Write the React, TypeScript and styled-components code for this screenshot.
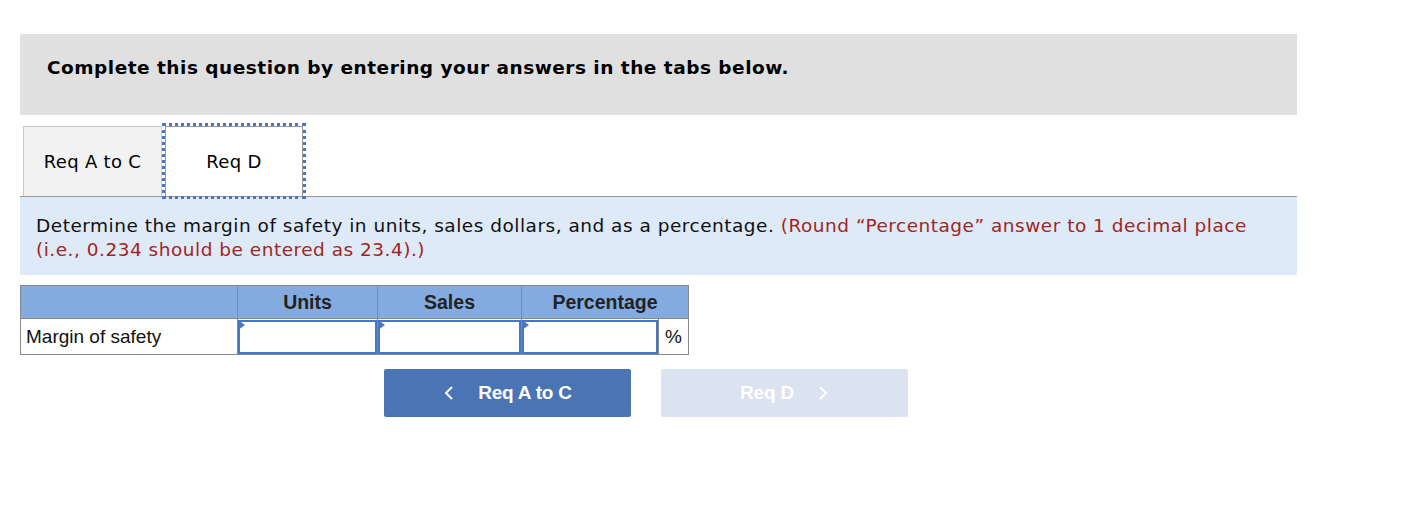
import React from "react";
import styled, { createGlobalStyle } from "styled-components";

const GlobalStyle = createGlobalStyle`
  body {
    margin: 0;
    background: #ffffff;
    font-family: "DejaVu Sans", Verdana, sans-serif;
  }
`;

const blue = "#4a76c0";

const Page = styled.div`
  width: 1277px;
  padding: 34px 0 0 20px;
`;

const Banner = styled.div`
  box-sizing: border-box;
  height: 81px;
  padding: 23px 27px;
  background: #e0e0e0;
  font-weight: bold;
  font-size: 18.5px;
  letter-spacing: 0.5px;
  color: #000;
`;

const TabRow = styled.div`
  display: flex;
  margin-top: 11px;
  padding-left: 3px;
  border-bottom: 1px solid #999;
`;

const Tab = styled.div<{ $active?: boolean }>`
  box-sizing: border-box;
  height: 70px;
  width: ${p => (p.$active ? "138px" : "139px")};
  margin-right: 3px;
  display: flex;
  align-items: center;
  justify-content: center;
  font-size: 18px;
  letter-spacing: 0.3px;
  color: #000;
  background: ${p => (p.$active ? "#fff" : "#f2f2f2")};
  border: 1px solid ${p => (p.$active ? "#999" : "#c8c8c8")};
  border-bottom: none;
  outline: ${p => (p.$active ? `3px dotted ${blue}` : "none")};
`;

const Instructions = styled.div`
  box-sizing: border-box;
  height: 78px;
  padding: 17px 16px 0;
  background: #deeaf8;
  font-size: 18.5px;
  letter-spacing: 0.5px;
  line-height: 24px;
  color: #111;
`;

const Note = styled.span`
  color: #a52420;
`;

const Grid = styled.table`
  margin-top: 10px;
  border-collapse: collapse;
  font-family: "Liberation Sans", Arial, sans-serif;
  font-size: 19px;
  color: #111;
`;

const HeadCell = styled.th<{ $w: number }>`
  width: ${p => p.$w}px;
  height: 33px;
  box-sizing: border-box;
  padding: 0;
  background: #84abe0;
  border: 1px solid #888;
  font-weight: bold;
  font-size: 19.5px;
  color: #222;
  text-align: center;
`;

const LabelCell = styled.td`
  height: 35px;
  box-sizing: border-box;
  padding: 0 0 0 5px;
  border: 1px solid #888;
  text-align: left;
`;

const InputCell = styled.td`
  height: 35px;
  padding: 0;
  border: 1px solid #888;
`;

const Field = styled.div`
  position: relative;
  box-sizing: border-box;
  height: 34px;
  border: 2px solid ${blue};
  background: #fff;
  &::before {
    content: "";
    position: absolute;
    left: -2px;
    top: -2px;
    border-top: 5px solid transparent;
    border-bottom: 5px solid transparent;
    border-left: 7px solid ${blue};
  }
`;

const UnitCell = styled.td<{ $w: number }>`
  width: ${p => p.$w}px;
  padding: 0;
  border: 1px solid #888;
  text-align: center;
`;

const Nav = styled.div`
  display: flex;
  gap: 30px;
  margin-top: 14px;
  padding-left: 364px;
`;

const NavButton = styled.button<{ $disabled?: boolean }>`
  box-sizing: border-box;
  width: 247px;
  height: 48px;
  display: flex;
  align-items: center;
  justify-content: center;
  gap: 24px;
  border: none;
  border-radius: 2px;
  background: ${p => (p.$disabled ? "#dae3ef" : "#4a74b4")};
  color: #fff;
  font-family: "Liberation Sans", Arial, sans-serif;
  font-weight: bold;
  font-size: 19px;
  letter-spacing: -0.2px;
  cursor: ${p => (p.$disabled ? "default" : "pointer")};
`;

const Chevron = ({ dir }: { dir: "left" | "right" }) => (
  <svg width="11" height="16" viewBox="0 0 11 16">
    <polyline
      points={dir === "left" ? "9,2 3,8 9,14" : "2,2 8,8 2,14"}
      fill="none"
      stroke="#fff"
      strokeWidth="2"
    />
  </svg>
);

export default function App() {
  return (
    <Page>
      <GlobalStyle />
      <Banner>Complete this question by entering your answers in the tabs below.</Banner>
      <TabRow>
        <Tab>Req A to C</Tab>
        <Tab $active>Req D</Tab>
      </TabRow>
      <Instructions>
        Determine the margin of safety in units, sales dollars, and as a percentage.{" "}
        <Note>(Round “Percentage” answer to 1 decimal place (i.e., 0.234 should be entered as 23.4).)</Note>
      </Instructions>
      <Grid>
        <thead>
          <tr>
            <HeadCell $w={217} />
            <HeadCell $w={140}>Units</HeadCell>
            <HeadCell $w={144}>Sales</HeadCell>
            <HeadCell $w={167} colSpan={2}>Percentage</HeadCell>
          </tr>
        </thead>
        <tbody>
          <tr>
            <LabelCell>Margin of safety</LabelCell>
            <InputCell><Field /></InputCell>
            <InputCell><Field /></InputCell>
            <InputCell><Field /></InputCell>
            <UnitCell $w={29}>%</UnitCell>
          </tr>
        </tbody>
      </Grid>
      <Nav>
        <NavButton>
          <Chevron dir="left" />
          <span>Req A to C</span>
        </NavButton>
        <NavButton $disabled>
          <span>Req D</span>
          <Chevron dir="right" />
        </NavButton>
      </Nav>
    </Page>
  );
}
